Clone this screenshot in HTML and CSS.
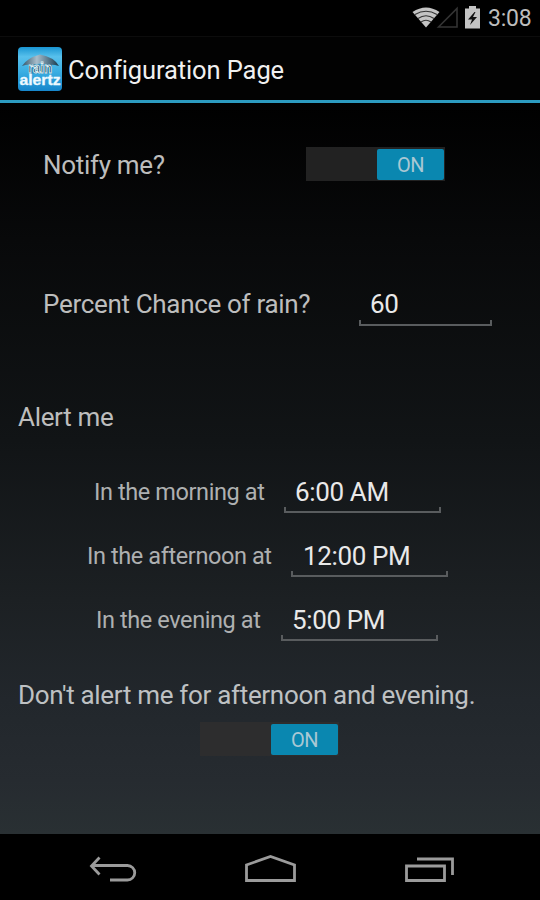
FILE: index.html
```
<!DOCTYPE html>
<html lang="en">
<head>
<meta charset="utf-8">
<title>Configuration Page</title>
<link rel="stylesheet" href="styles.css">
</head>
<body>
<div class="phone">
  <header class="status">
    <svg class="status-icons" width="84" height="36" viewBox="0 0 84 36">
      <path d="M0.500 12Q14 3 27.500 12L14 27.500Z" fill="#c4c4c4"/>
      <path d="M3 14.500Q14 8 25 14.500M6 18.500Q14 13 22 18.500M9 22Q14 18.500 19 22" fill="none" stroke="#333" stroke-width="1.100"/>
      <path d="M26.500 27L45 8.500V27Z" fill="none" stroke="#343434" stroke-width="1.600"/>
      <path d="M53 8.500H57V6H64V8.500H68V28.500H53Z" fill="#c4c4c4"/>
      <path d="M62.500 12L56 19.500H60L58 25L65 17H61L63.500 12Z" fill="#111"/>
    </svg>
    <span class="clock">3:08</span>
  </header>
  <div class="action-bar">
    <svg class="logo" width="46" height="46" viewBox="0 0 46 46">
      <defs>
        <linearGradient id="sky" x1="0" y1="0" x2="0" y2="1"><stop offset="0" stop-color="#1995d2"/><stop offset=".22" stop-color="#58c0ec"/><stop offset=".55" stop-color="#3bafe3"/><stop offset="1" stop-color="#1686cb"/></linearGradient>
        <linearGradient id="canopy" x1="0" y1="0" x2="1" y2="0"><stop offset="0" stop-color="#31566b"/><stop offset=".4" stop-color="#a9bdca"/><stop offset=".62" stop-color="#6f8da0"/><stop offset="1" stop-color="#15394d"/></linearGradient>
      </defs>
      <rect x="1" y="1" width="44" height="44" rx="4" fill="url(#sky)"/>
      <path d="M5 20Q10 12 23 8.500Q37 11 42 20Q36 18 31 19Q23 16 16 19Q10 18 5 20Z" fill="url(#canopy)"/>
      <path d="M11 18H35V27.500H11Z" fill="#1f6389" opacity=".5"/>
      <text class="logo-rain" x="23" y="27" text-anchor="middle" textLength="24" lengthAdjust="spacingAndGlyphs">rain</text>
      <text class="logo-alertz" x="23" y="38.500" text-anchor="middle" textLength="41" lengthAdjust="spacingAndGlyphs">alertz</text>
    </svg>
    <h1 class="title">Configuration Page</h1>
  </div>
  <main class="content">
    <section class="row notify">
      <span class="label notify-label">Notify me?</span>
      <span class="switch"><span class="thumb">ON</span></span>
    </section>
    <section class="row chance">
      <span class="label chance-label">Percent Chance of rain?</span>
      <span class="field percent">60</span>
    </section>
    <h2 class="label alert-heading">Alert me</h2>
    <section class="row time morning"><span class="time-label">In the morning at</span><span class="field">6:00 AM</span></section>
    <section class="row time afternoon"><span class="time-label">In the afternoon at</span><span class="field">12:00 PM</span></section>
    <section class="row time evening"><span class="time-label">In the evening at</span><span class="field">5:00 PM</span></section>
    <p class="label mute-label">Don't alert me for afternoon and evening.</p>
    <span class="switch mute-switch"><span class="thumb">ON</span></span>
  </main>
  <nav class="nav">
    <svg width="540" height="66" viewBox="0 0 540 66" fill="none" stroke="#9b9b9b" stroke-width="2.800">
      <path d="M99.500 23.500L91.500 32L99.500 40.500M91.500 31.500H127.500A7 7 0 0 1 127.500 46H110"/>
      <path d="M246.500 46.500V31L270.500 22.500L294.500 31V46.500Z"/>
      <path d="M406.500 32H444.500V46.500H406.500ZM417 25H452.500V41"/>
    </svg>
  </nav>
</div>
</body>
</html>
```
FILE: styles.css
```
* { box-sizing: border-box; }
body { margin: 0; background: #000; font-family: Roboto, sans-serif; }
.phone { width: 540px; height: 900px; display: flex; flex-direction: column; overflow: hidden; white-space: nowrap;
  background: linear-gradient(#000 0, #000 100px, #08090a 240px, #111416 440px, #1c2023 600px, #22272c 700px, #262b30 780px, #293033 834px); }
.status { height: 36px; display: flex; background: #000; }
.status-icons { margin-left: 412px; flex: none; }
.clock { margin-left: -8px; font-size: 23px; line-height: 38px; letter-spacing: -.2px; color: #bdbdbd; }
.action-bar { height: 67px; padding: 0 17px; display: flex; align-items: center; gap: 5px; background: #020202;
  border-top: 1px solid #0c0c0c; border-bottom: 3px solid #2c9bc0; }
.logo { flex: none; }
.logo-rain { font: bold 14px "Liberation Sans", sans-serif; fill: #173e56; stroke: #d9edf5; stroke-width: .9px; }
.logo-alertz { font: bold 14px "Liberation Sans", sans-serif; fill: #eef9ff; stroke: #eef9ff; stroke-width: .3px; }
.title { margin: 2px 0 0; font-size: 25.500px; font-weight: 400; line-height: 32px; letter-spacing: -.1px; color: #f0f0f0; }
.content { height: 731px; display: flex; flex-direction: column; }
.row { display: flex; }
.label { margin: 0; font-size: 26px; font-weight: 400; line-height: 32px; letter-spacing: -.32px; color: #bdbdbd; }
.notify { margin-top: 44px; height: 34px; padding-left: 43px; }
.notify-label { width: 263px; padding-top: 2px; }
.switch { width: 139px; height: 34px; padding: 2px 1px 2px 71px; background: #222; flex: none; }
.thumb { display: block; height: 31px; background: #0a87b0; border-radius: 2px; color: #a9c8d4; font-size: 20px; line-height: 33px; letter-spacing: -.4px; text-align: center; }
.chance { margin-top: 107px; height: 38px; padding-left: 43px; }
.chance-label { width: 316px; }
.field { position: relative; width: 157px; height: 37px; padding-left: 11px; font-size: 26px; line-height: 32px; letter-spacing: -.36px; color: #e9e9e9; border-bottom: 2px solid #595c5e; }
.field::before, .field::after { content: ""; position: absolute; bottom: 0; width: 2px; height: 4px; background: #595c5e; }
.field::before { left: 0; }
.field::after { right: 0; }
.percent { width: 133px; height: 38px; }
.alert-heading { margin: 75px 0 0 18px; height: 32px; }
.time { height: 64px; }
.time-label { font-size: 23.500px; line-height: 32px; letter-spacing: -.4px; color: #aeb0b1; }
.morning { margin-top: 43px; padding-left: 94px; }
.morning .time-label { width: 190px; }
.afternoon { padding-left: 87px; }
.afternoon .time-label { width: 204px; }
.afternoon .field { padding-left: 12px; }
.evening { padding-left: 96px; }
.evening .time-label { width: 185px; }
.mute-label { margin: 11px 0 0 18px; color: #bec1c3; }
.mute-switch { margin: 11px 0 0 200px; background: #2d2d2e; }
.nav { height: 66px; background: #000; }
.nav svg { display: block; }
```
